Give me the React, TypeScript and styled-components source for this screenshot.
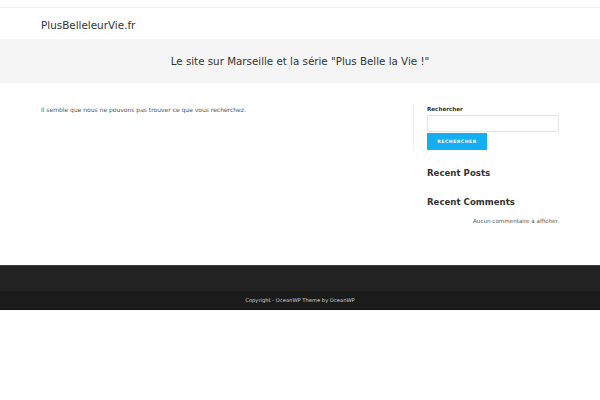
import React from "react";
import styled, { createGlobalStyle } from "styled-components";

const GlobalStyle = createGlobalStyle`
  html, body {
    margin: 0;
    padding: 0;
    background: #fff;
    font-family: "DejaVu Sans", "Liberation Sans", sans-serif;
    color: #333;
  }
`;

const TopSpace = styled.div`
  height: 7px;
  border-bottom: 1px solid #f1f1f1;
`;

const Header = styled.header`
  height: 31px;
  display: flex;
  align-items: center;
`;

const Container = styled.div`
  width: 518px;
  margin: 0 auto;
`;

const Logo = styled.a`
  font-size: 10.4px;
  color: #333;
  text-decoration: none;
`;

const PageHeader = styled.div`
  height: 44px;
  background-color: #f5f5f5;
  display: flex;
  align-items: center;
  justify-content: center;
`;

const PageTitle = styled.h1`
  margin: 0;
  font-size: 10.3px;
  font-weight: normal;
  color: #333;
`;

const Main = styled.div`
  height: 182px;
  padding-top: 20px;
  box-sizing: border-box;
`;

const Columns = styled.div`
  display: flex;
  justify-content: space-between;
`;

const Primary = styled.div`
  flex: 1;
  padding-top: 3px;
`;

const NotFound = styled.p`
  margin: 0;
  font-size: 6px;
  color: #555;
`;

const Sidebar = styled.aside`
  width: 146px;
`;

const Widget = styled.div<{ $gap?: number; $bordered?: boolean }>`
  margin-bottom: ${(p) => p.$gap ?? 0}px;
  padding-left: 13px;
  border-left: 1px solid ${(p) => (p.$bordered ? "#f1f1f1" : "transparent")};
`;

const Label = styled.label`
  display: block;
  padding-top: 3px;
  font-size: 5.6px;
  font-weight: bold;
  color: #333;
  margin-bottom: 3px;
`;

const SearchInput = styled.input`
  display: block;
  width: 132px;
  height: 17px;
  box-sizing: border-box;
  border: 1px solid #e4e4e4;
  border-radius: 2px;
  margin: 0;
  padding: 0 4px;
  outline: none;
`;

const SearchButton = styled.button`
  display: block;
  margin-top: 1px;
  height: 17px;
  width: 60px;
  border: none;
  background-color: #13aff0;
  color: #fff;
  font-family: "DejaVu Sans", sans-serif;
  font-size: 4.6px;
  font-weight: bold;
  letter-spacing: 0.5px;
  text-transform: uppercase;
  padding: 0;
`;

const WidgetTitle = styled.h4`
  margin: 0;
  font-size: 8.6px;
  font-weight: bold;
  color: #333;
`;

const Empty = styled.p`
  margin: 11px 0 0;
  text-align: right;
  font-size: 5.6px;
  color: #555;
`;

const FooterWidgets = styled.div`
  height: 25px;
  background-color: #222;
  border-top: 1px solid #3a3a3a;
`;

const FooterBottom = styled.div`
  height: 18px;
  background-color: #1b1b1b;
  display: flex;
  align-items: center;
  justify-content: center;
  border-bottom: 1px solid #111;
`;

const Copyright = styled.span`
  font-size: 5.2px;
  color: #ccc;
`;

const App: React.FC = () => {
  return (
    <>
      <GlobalStyle />
      <TopSpace />
      <Header>
        <Container>
          <Logo href="#">PlusBelleleurVie.fr</Logo>
        </Container>
      </Header>
      <PageHeader>
        <PageTitle>Le site sur Marseille et la série "Plus Belle la Vie !"</PageTitle>
      </PageHeader>
      <Main>
        <Container>
          <Columns>
            <Primary>
              <NotFound>Il semble que nous ne pouvons pas trouver ce que vous recherchez.</NotFound>
            </Primary>
            <Sidebar>
              <Widget $gap={18} $bordered>
                <Label>Rechercher</Label>
                <SearchInput type="search" />
                <SearchButton type="button">Rechercher</SearchButton>
              </Widget>
              <Widget $gap={19}>
                <WidgetTitle>Recent Posts</WidgetTitle>
              </Widget>
              <Widget>
                <WidgetTitle>Recent Comments</WidgetTitle>
                <Empty>Aucun commentaire à afficher.</Empty>
              </Widget>
            </Sidebar>
          </Columns>
        </Container>
      </Main>
      <FooterWidgets />
      <FooterBottom>
        <Copyright>Copyright - OceanWP Theme by OceanWP</Copyright>
      </FooterBottom>
    </>
  );
};

export default App;
